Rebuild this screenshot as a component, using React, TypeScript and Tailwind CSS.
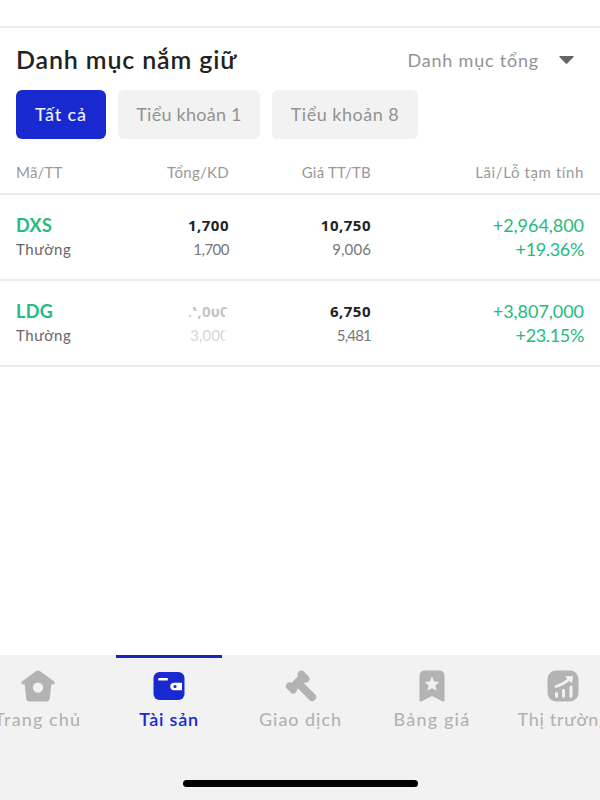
import React, { useState } from "react";

const accounts = [
  { id: "all", label: "Tất cả", size: "w-[90px]", tracking: "tracking-[0.9px]" },
  { id: "sub1", label: "Tiểu khoản 1", size: "w-[142px]", tracking: "tracking-[0.25px]" },
  { id: "sub8", label: "Tiểu khoản 8", size: "w-[146px]", tracking: "tracking-[0.5px]" }
];

const holdings = [
  {
    code: "DXS",
    status: "Thường",
    total: "1,700",
    available: "1,700",
    marketPrice: "10,750",
    averagePrice: "9,006",
    profit: "+2,964,800",
    percent: "+19.36%",
    faded: false
  },
  {
    code: "LDG",
    status: "Thường",
    total: "3,000",
    available: "3,000",
    marketPrice: "6,750",
    averagePrice: "5,481",
    profit: "+3,807,000",
    percent: "+23.15%",
    faded: true
  }
];

const HomeIcon = () => (
  <svg width="34" height="32" viewBox="0 0 34 32" fill="currentColor">
    <path
      fillRule="evenodd"
      d="M15.2 1.1Q17-.2 18.8 1.1L32.8 11.2Q34.2 12.4 33.6 13.6Q33.2 14.4 31.6 14.4H30.2L28.9 28Q28.5 31.5 25 31.5H9Q5.5 31.5 5.1 28L3.8 14.4H2.4Q.8 14.4.4 13.6Q-.2 12.4 1.2 11.2ZM17 12.4A5.2 5.2 0 1 0 17 22.8A5.2 5.2 0 1 0 17 12.4Z"
    />
  </svg>
);

const WalletIcon = () => (
  <svg width="32" height="32" viewBox="0 0 32 32">
    <rect x="0.5" y="2" width="31" height="28" rx="6" fill="currentColor" />
    <rect x="5.3" y="8" width="9.5" height="2.6" rx="0.6" fill="white" />
    <path d="M21 12.8H29V20.2H21A3.7 3.7 0 0 1 21 12.8Z" fill="white" />
    <circle cx="22" cy="16.5" r="1.6" fill="currentColor" />
  </svg>
);

const GavelIcon = () => (
  <svg width="32" height="32" viewBox="0 0 32 32" fill="currentColor" stroke="currentColor" strokeLinecap="round" strokeLinejoin="round">
    <path d="M5.5 15.5L16 4.5L20.8 9.5L10 20Z" strokeWidth="2" />
    <path d="M4.6 16.2L8.2 19.8M16.4 4.4L20.8 8.8" strokeWidth="7.4" />
    <path d="M14 14L27.2 27.2" strokeWidth="8" />
  </svg>
);

const BookmarkIcon = () => (
  <svg width="26" height="32" viewBox="0 0 26 32">
    <path d="M6 0.5H20Q25.5 .5 25.5 6V30Q25.5 32.4 23.3 31.2L13 26L2.7 31.2Q.5 32.4.5 30V6Q.5.5 6 .5Z" fill="currentColor" />
    <path d="M13 6.6L15.1 11.6L20.3 12L16.3 15.4L17.6 20.8L13 17.9L8.4 20.8L9.7 15.4L5.7 12L10.9 11.6Z" fill="#f2f2f2" />
  </svg>
);

const MarketIcon = () => (
  <svg width="32" height="32" viewBox="0 0 32 32">
    <rect x="0.5" y="0.5" width="31" height="31" rx="8.5" fill="currentColor" />
    <path d="M9.5 23.5V26.2M16.5 20.3V26.2M24 17V26.2" stroke="#f2f2f2" strokeWidth="3" strokeLinecap="round" />
    <path d="M9 16.5Q16 14.5 22.5 9" stroke="#f2f2f2" strokeWidth="2.8" strokeLinecap="round" fill="none" />
    <path d="M18 6.3L26 6L25 13.5Z" fill="#f2f2f2" />
  </svg>
);

const tabs = [
  { id: "home", label: "Trang chủ", icon: <HomeIcon />, tracking: "tracking-[1.1px]" },
  { id: "assets", label: "Tài sản", icon: <WalletIcon />, tracking: "tracking-[0.8px]" },
  { id: "trade", label: "Giao dịch", icon: <GavelIcon />, tracking: "tracking-[0.95px]" },
  { id: "board", label: "Bảng giá", icon: <BookmarkIcon />, tracking: "tracking-[1.2px]" },
  { id: "market", label: "Thị trường", icon: <MarketIcon />, tracking: "tracking-[0.7px]" }
];

const App = () => {
  const [account, setAccount] = useState("all");
  const [tab, setTab] = useState("assets");

  return (
    <div className="flex h-[800px] w-[600px] flex-col overflow-hidden bg-white font-['Lato','Noto_Sans',sans-serif]">
      <main className="flex flex-1 flex-col">
        <div className="h-[28px] border-b-2 border-[#ececec]" />
        <div className="flex h-[62px] items-center justify-between pt-[3px] pr-[26px] pl-4">
          <h1 className="mb-[3px] text-[25px] leading-8 font-semibold tracking-[0.85px] text-[#222]">Danh mục nắm giữ</h1>
          <button className="flex items-center gap-5 text-[18px] tracking-[0.8px] text-[#939393]">
            Danh mục tổng
            <svg className="mb-px" width="15" height="8" viewBox="0 0 15 8" fill="#666">
              <path d="M1 0H14Q15.4 0 14.3 1.2L8.5 7.2Q7.5 8.2 6.5 7.2L.7 1.2Q-.4 0 1 0Z" />
            </svg>
          </button>
        </div>

        <div className="flex gap-3 px-4">
          {accounts.map((item) => (
            <button
              key={item.id}
              onClick={() => setAccount(item.id)}
              className={`${item.size} ${item.tracking} h-[49px] rounded-md text-[18px] whitespace-nowrap ${
                account === item.id ? "bg-[#1829d0] font-medium text-[#f1f2ff]" : "bg-[#f2f2f2] text-[#929292]"
              }`}
            >
              {item.label}
            </button>
          ))}
        </div>

        <div className="mt-[13px] grid h-[43px] grid-cols-[100px_113px_142px_213px] items-center border-b-2 border-[#ebebeb] px-4 text-right text-[15px] tracking-[0.2px] text-[#999]">
          <span className="text-left">Mã/TT</span>
          <span className="tracking-[0.3px]">Tổng/KD</span>
          <span>Giá TT/TB</span>
          <span className="tracking-[0.6px]">Lãi/Lỗ tạm tính</span>
        </div>

        {holdings.map((item) => (
          <div
            key={item.code}
            className="grid h-[86px] grid-cols-[100px_113px_142px_213px] content-center border-b-2 border-[#ebebeb] px-4 text-right text-[15px] leading-6 text-[#777]"
          >
            <div className="text-left">
              <p className="text-[18px] font-bold tracking-[0.4px] text-[#26b981]">{item.code}</p>
              <p className="tracking-[0.6px] text-[#666]">{item.status}</p>
            </div>
            {item.faded ? (
              <div className="text-[#d4d4d4]">
                <p className="relative font-['Noto_Sans'] font-bold tracking-[0.4px] text-[#c4c4c4]">
                  {item.total}
                  <span className="absolute top-[4px] right-[36px] h-[11px] w-[6px] -rotate-12 bg-white" />
                  <span className="absolute top-[12px] right-[31px] h-[7px] w-[7px] bg-white" />
                  <span className="absolute top-[4px] right-[10px] h-[6px] w-[9px] bg-white" />
                  <span className="absolute top-[10px] -right-px h-[9px] w-[5px] bg-white" />
                </p>
                <p className="tracking-[0.1px] [mask-image:linear-gradient(to_left,transparent_2px,black_6px)]">{item.available}</p>
              </div>
            ) : (
              <div>
                <p className="font-['Noto_Sans'] font-bold tracking-[0.5px] text-[#222]">{item.total}</p>
                <p className="tracking-[-0.5px]">{item.available}</p>
              </div>
            )}
            <div>
              <p className="font-['Noto_Sans'] font-bold tracking-[0.5px] text-[#222]">{item.marketPrice}</p>
              <p className={item.faded ? "tracking-[-0.8px]" : "tracking-[0.1px]"}>{item.averagePrice}</p>
            </div>
            <div className="text-[18px] text-[#26b981]">
              <p className="tracking-[-0.05px]">{item.profit}</p>
              <p className="tracking-[-0.35px]">{item.percent}</p>
            </div>
          </div>
        ))}
      </main>

      <nav className="h-[145px] bg-[#f2f2f2]">
        <div className="-ml-[28px] flex w-[657px]">
          {tabs.map((item) => (
            <button
              key={item.id}
              onClick={() => setTab(item.id)}
              className={`${item.tracking} flex flex-1 flex-col items-center ${
                tab === item.id ? "font-semibold text-[#1829d0]" : "font-medium text-[#b3b3b3]"
              }`}
            >
              <span className={`h-[3px] w-[106px] ${tab === item.id ? "bg-[#1a27b8]" : "bg-transparent"}`} />
              <span className="mt-[12px] flex h-8 items-center">{item.icon}</span>
              <span className="mt-[3px] text-[18px] leading-7 whitespace-nowrap">{item.label}</span>
            </button>
          ))}
        </div>
        <div className="mx-auto mt-[47px] h-[7px] w-[235px] rounded-full bg-black" />
      </nav>
    </div>
  );
};

export default App;
